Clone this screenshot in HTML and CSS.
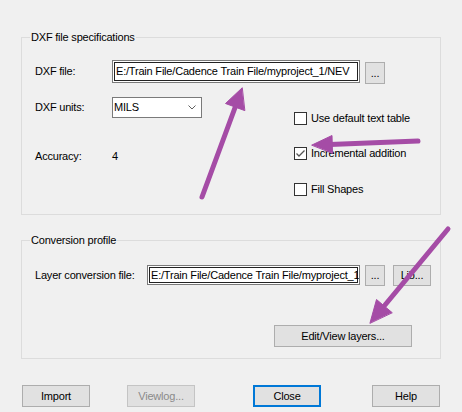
FILE: index.html
```html
<!DOCTYPE html>
<html>
<head>
<meta charset="utf-8">
<link rel="stylesheet" href="styles.css">
</head>
<body>
<div class="dialog">
  <div class="group g1">
    <div class="legend">DXF file specifications</div>
    <div class="row r-file">
      <span class="label w77">DXF file:</span>
      <div class="edit e1">E:/Train File/Cadence Train File/myproject_1/NEV</div>
      <button class="btn browse">...</button>
    </div>
    <div class="body">
      <div class="left">
        <div class="row r-units">
          <span class="label w77">DXF units:</span>
          <div class="select">MILS<svg class="chev" width="8" height="5" viewBox="0 0 8 5"><path d="M0.5 0.5 L4 4 L7.5 0.5" fill="none" stroke="#606060" stroke-width="1"/></svg></div>
        </div>
        <div class="row r-acc">
          <span class="label w77">Accuracy:</span>
          <span>4</span>
        </div>
      </div>
      <div class="right">
        <div class="check c1"><span class="box"></span><span>Use default text table</span></div>
        <div class="check c2"><span class="box"><svg width="11" height="11" viewBox="0 0 11 11"><path d="M1.5 5.5 L4 8 L9.5 2.5" fill="none" stroke="#555" stroke-width="1.3"/></svg></span><span>Incremental addition</span></div>
        <div class="check c3"><span class="box"></span><span>Fill Shapes</span></div>
      </div>
    </div>
  </div>

  <div class="group g2">
    <div class="legend">Conversion profile</div>
    <div class="row r-layer">
      <span class="label w112">Layer conversion file:</span>
      <div class="edit e2">E:/Train File/Cadence Train File/myproject_1/NEV</div>
      <button class="btn browse">...</button>
      <button class="btn lib">Lib...</button>
    </div>
    <button class="btn editview">Edit/View layers...</button>
  </div>

  <div class="actions">
    <button class="btn act import">Import</button>
    <button class="btn act viewlog" disabled>Viewlog...</button>
    <button class="btn act close">Close</button>
    <button class="btn act help">Help</button>
  </div>

  <svg class="annot" width="462" height="412" viewBox="0 0 462 412">
    <g fill="#a54ca6" stroke="#a54ca6" stroke-linecap="round" stroke-linejoin="round">
      <line x1="202" y1="197" x2="236" y2="105" stroke-width="5"/>
      <polygon points="242,88 225.5,103.5 244.5,110.5" stroke-width="1"/>
      <line x1="418" y1="141" x2="330" y2="144.5" stroke-width="5"/>
      <polygon points="312,145 332,135.5 332.5,153" stroke-width="1"/>
      <line x1="448" y1="229" x2="385" y2="305" stroke-width="5"/>
      <polygon points="370,323 376.5,299.5 392,312.5" stroke-width="1"/>
    </g>
  </svg>
</div>
</body>
</html>
```

FILE: styles.css
```css
* { box-sizing: border-box; }
html, body { margin: 0; padding: 0; background: #f0f0f0; }
body {
  font-family: "Liberation Sans", Arial, sans-serif;
  font-size: 11px;
  letter-spacing: -0.2px;
  color: #000;
  line-height: 13px;
}
.dialog {
  position: relative;
  width: 462px;
  height: 412px;
  padding: 37px 0 0 21px;
  overflow: hidden;
}
.group {
  width: 420px;
  border: 1px solid #dcdcdc;
  padding-left: 13px;
}
.g1 { height: 178px; }
.g2 { height: 119px; margin-top: 25px; }
.legend {
  width: fit-content;
  margin: -7px 0 0 -5px;
  padding: 0 1px;
  background: #f0f0f0;
  height: 13px;
  white-space: nowrap;
}
.row { display: flex; align-items: center; }
.label { flex: none; white-space: nowrap; }
.w77 { width: 77px; }
.w112 { width: 112px; }
.r-file { margin-top: 16px; height: 23px; }
.edit {
  flex: none;
  background: #fff;
  border: 1px solid #7a7a7a;
  box-shadow: inset 0 0 0 1px #fff, inset 0 0 0 2px #222;
  white-space: nowrap;
  overflow: hidden;
  padding-left: 3px;
  display: flex;
  align-items: center;
}
.e1 { width: 248px; height: 23px; }
.e2 { width: 213px; height: 20px; }
.btn {
  font: inherit;
  letter-spacing: inherit;
  color: #000;
  background: #e1e1e1;
  border: 1px solid #adadad;
  padding: 0;
  margin: 0;
  line-height: 13px;
  flex: none;
}
.browse { width: 20px; height: 22px; margin-left: 5px; }
.r-file .browse { align-self: flex-end; margin-bottom: -1px; }
.body { display: flex; margin-top: 14px; }
.left { width: 259px; flex: none; }
.r-units { height: 21px; }
.select {
  width: 90px;
  height: 21px;
  background: #fff;
  border: 1px solid #7a7a7a;
  display: flex;
  align-items: center;
  justify-content: space-between;
  padding: 0 5px 0 1px;
}
.chev { display: block; }
.r-acc { margin-top: 32px; height: 13px; }
.right { padding-top: 15px; }
.check { display: flex; align-items: center; height: 13px; white-space: nowrap; }
.c2 { margin-top: 22px; }
.c3 { margin-top: 23px; }
.box {
  width: 13px;
  height: 13px;
  border: 1px solid #333;
  background: #fff;
  margin-right: 4px;
  flex: none;
  display: flex;
}
.box svg { display: block; }
.r-layer { margin-top: 18px; height: 21px; align-items: flex-start; }
.r-layer .label { align-self: center; }
.r-layer .browse { height: 21px; }
.lib { width: 38px; height: 21px; margin-left: 8px; }
.editview {
  display: block;
  width: 138px;
  height: 22px;
  margin: 39px 0 0 239px;
}
.actions { display: flex; margin-top: 26px; padding-left: 1px; }
.act { width: 68px; height: 22px; }
.viewlog { margin-left: 37px; color: #8a8a8a; border-color: #c4c4c4; background: #e0e0e0; }
.close { margin-left: 58px; border: 2px solid #0078d7; }
.help { margin-left: 51px; }
.annot { position: absolute; left: 0; top: 0; pointer-events: none; }
```
